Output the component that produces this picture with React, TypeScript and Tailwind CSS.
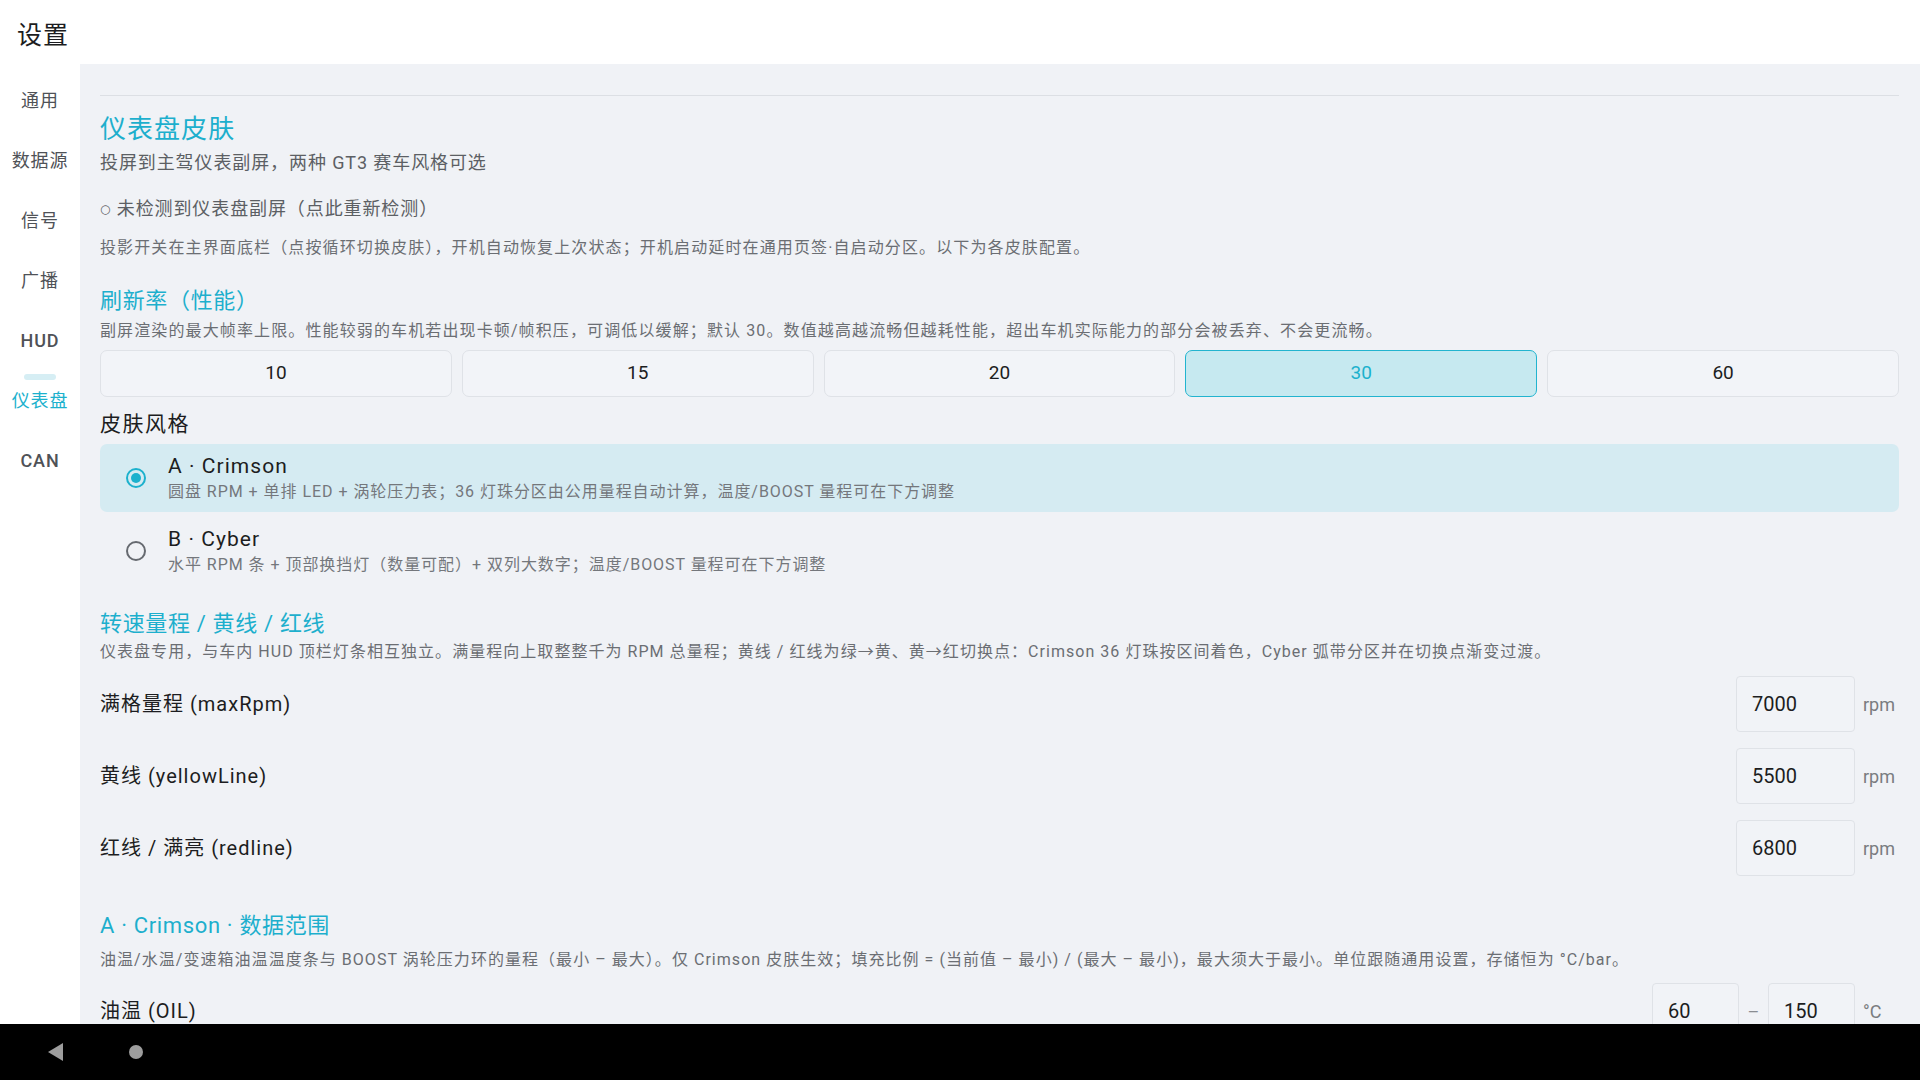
import React from 'react';

const NAV = ['通用', '数据源', '信号', '广播', 'HUD', '仪表盘', 'CAN'];
const RATES = [10, 15, 20, 30, 60];

function Radio({ checked }: { checked: boolean }) {
  return checked ? (
    <span className="flex h-[20px] w-[20px] items-center justify-center rounded-full border-2 border-[#1cb1cd]">
      <span className="h-[10px] w-[10px] rounded-full bg-[#1cb1cd]" />
    </span>
  ) : (
    <span className="h-[20px] w-[20px] rounded-full border-2 border-[#666a70]" />
  );
}

function SkinOption({ title, desc, checked }: { title: string; desc: string; checked: boolean }) {
  return (
    <div
      className={`mt-[5px] flex h-[68px] items-center rounded-[7px] pl-[26px] ${
        checked ? 'bg-[#d5ebf2]' : ''
      }`}
    >
      <Radio checked={checked} />
      <div className="ml-[22px] flex flex-col">
        <span className="text-[21px] leading-[28px] tracking-[0.05em] text-[#1c1d21]">{title}</span>
        <span className="text-[16px] leading-[24px] tracking-[0.06em] text-[#74777c]">{desc}</span>
      </div>
    </div>
  );
}

function NumberBox({ value, width }: { value: string; width: string }) {
  return (
    <div
      className={`flex h-[56px] ${width} items-center rounded-[4px] border border-[#dfe2e7] bg-[#f1f3f7] pl-[15px] text-[20px] text-[#1c1d21]`}
    >
      {value}
    </div>
  );
}

function RpmRow({ label, value, first }: { label: string; value: string; first?: boolean }) {
  return (
    <div className={`flex h-[56px] items-center ${first ? 'mt-[11px]' : 'mt-[16px]'}`}>
      <span className="flex-1 text-[20px] tracking-[0.05em] text-[#1c1d21]">{label}</span>
      <NumberBox value={value} width="w-[119px]" />
      <span className="ml-[8px] w-[36px] text-[18px] text-[#7a7c80]">rpm</span>
    </div>
  );
}

export default function App() {
  return (
    <div className="flex h-[1080px] w-[1920px] flex-col overflow-hidden bg-white font-['Roboto','Noto_Sans_CJK_SC',sans-serif]">
      {/* 顶栏 */}
      <header className="flex h-[64px] shrink-0 items-center pl-[17px] pt-[7px] text-[25px] tracking-[0.04em] text-[#1c1d21]">
        设置
      </header>

      <div className="flex min-h-0 flex-1">
        {/* 侧边导航 */}
        <nav className="flex w-[80px] shrink-0 flex-col pt-[6px]">
          {NAV.map((item) => {
            const active = item === '仪表盘';
            const latin = item === 'HUD' || item === 'CAN';
            return (
              <div key={item} className="relative flex h-[60px] items-center justify-center">
                {active && (
                  <span className="absolute left-[24px] top-[4px] h-[6px] w-[32px] rounded-full bg-[#d6eef4]" />
                )}
                <span
                  className={`text-[18px] tracking-[0.05em] ${latin ? 'font-medium' : ''} ${
                    active ? 'text-[#1cb1cd]' : 'text-[#4f5257]'
                  }`}
                >
                  {item}
                </span>
              </div>
            );
          })}
        </nav>

        {/* 内容区 */}
        <main className="min-w-0 flex-1 overflow-hidden bg-[#f0f2f6] pl-[20px] pr-[21px] pt-[31px]">
          <div className="h-px bg-[#dcdfe4]" />

          <h1 className="mt-[15px] text-[26px] leading-[36px] tracking-[0.04em] text-[#1dafcd]">仪表盘皮肤</h1>
          <p className="mt-[2px] text-[18px] leading-[28px] tracking-[0.05em] text-[#5c5f64]">
            投屏到主驾仪表副屏，两种 GT3 赛车风格可选
          </p>
          <p className="mt-[18px] text-[18px] leading-[28px] tracking-[0.05em] text-[#5c5f64]">
            <span className="relative -top-[2px] font-['DejaVu_Sans'] text-[12px]">○</span> 未检测到仪表盘副屏（点此重新检测）
          </p>
          <p className="mt-[10px] text-[16px] leading-[26px] tracking-[0.07em] text-[#6b6e73]">
            投影开关在主界面底栏（点按循环切换皮肤），开机自动恢复上次状态；开机启动延时在通用页签·自启动分区。以下为各皮肤配置。
          </p>

          {/* 刷新率 */}
          <h2 className="mt-[25px] text-[22px] leading-[30px] tracking-[0.03em] text-[#1dafcd]">刷新率（性能）</h2>
          <p className="mt-[2px] text-[16px] leading-[26px] tracking-[0.07em] text-[#6b6e73]">
            副屏渲染的最大帧率上限。性能较弱的车机若出现卡顿/帧积压，可调低以缓解；默认 30。数值越高越流畅但越耗性能，超出车机实际能力的部分会被丢弃、不会更流畅。
          </p>
          <div className="mt-[6px] grid h-[47px] grid-cols-5 gap-[10px]">
            {RATES.map((r) =>
              r === 30 ? (
                <div
                  key={r}
                  className="flex items-center justify-center rounded-[7px] border-[1.5px] border-[#22b4cf] bg-[#c6e9f0] text-[19px] text-[#1cb1cd]"
                >
                  {r}
                </div>
              ) : (
                <div
                  key={r}
                  className="flex items-center justify-center rounded-[7px] border border-[#dfe2e7] bg-[#f2f4f8] text-[19px] text-[#1c1d21]"
                >
                  {r}
                </div>
              )
            )}
          </div>

          {/* 皮肤风格 */}
          <h2 className="mt-[12px] text-[21px] leading-[30px] tracking-[0.07em] text-[#1c1d21]">皮肤风格</h2>
          <div className="mt-[1px]">
            <SkinOption
              checked
              title="A · Crimson"
              desc="圆盘 RPM + 单排 LED + 涡轮压力表；36 灯珠分区由公用量程自动计算，温度/BOOST 量程可在下方调整"
            />
            <SkinOption
              checked={false}
              title="B · Cyber"
              desc="水平 RPM 条 + 顶部换挡灯（数量可配）+ 双列大数字；温度/BOOST 量程可在下方调整"
            />
          </div>

          {/* 转速量程 */}
          <h2 className="mt-[24px] text-[22px] leading-[30px] tracking-[0.03em] text-[#1dafcd]">
            转速量程 / 黄线 / 红线
          </h2>
          <p className="text-[16px] leading-[26px] tracking-[0.065em] text-[#6b6e73]">
            仪表盘专用，与车内 HUD 顶栏灯条相互独立。满量程向上取整整千为 RPM 总量程；黄线 / 红线为绿→黄、黄→红切换点：Crimson 36 灯珠按区间着色，Cyber 弧带分区并在切换点渐变过渡。
          </p>
          <RpmRow first label="满格量程 (maxRpm)" value="7000" />
          <RpmRow label="黄线 (yellowLine)" value="5500" />
          <RpmRow label="红线 / 满亮 (redline)" value="6800" />

          {/* 数据范围 */}
          <h2 className="mt-[35px] text-[22px] leading-[30px] tracking-[0.03em] text-[#1dafcd]">
            A · Crimson · 数据范围
          </h2>
          <p className="mt-[6px] text-[16px] leading-[26px] tracking-[0.065em] text-[#6b6e73]">
            油温/水温/变速箱油温温度条与 BOOST 涡轮压力环的量程（最小 – 最大）。仅 Crimson 皮肤生效；填充比例 = (当前值 – 最小) / (最大 – 最小)，最大须大于最小。单位跟随通用设置，存储恒为 °C/bar。
          </p>
          <div className="mt-[10px] flex h-[56px] items-center">
            <span className="flex-1 text-[20px] tracking-[0.05em] text-[#1c1d21]">油温 (OIL)</span>
            <NumberBox value="60" width="w-[87px]" />
            <span className="w-[29px] text-center text-[18px] text-[#8a8d92]">–</span>
            <NumberBox value="150" width="w-[87px]" />
            <span className="ml-[8px] w-[36px] text-[18px] text-[#7a7c80]">°C</span>
          </div>
        </main>
      </div>

      {/* 系统导航栏 */}
      <footer className="flex h-[56px] shrink-0 items-center bg-black">
        <svg className="ml-[48px]" width="15" height="18" viewBox="0 0 15 18">
          <polygon points="15,0 15,18 0,9" fill="#9d9d9d" />
        </svg>
        <span className="ml-[66px] h-[14px] w-[14px] rounded-full bg-[#9d9d9d]" />
      </footer>
    </div>
  );
}
